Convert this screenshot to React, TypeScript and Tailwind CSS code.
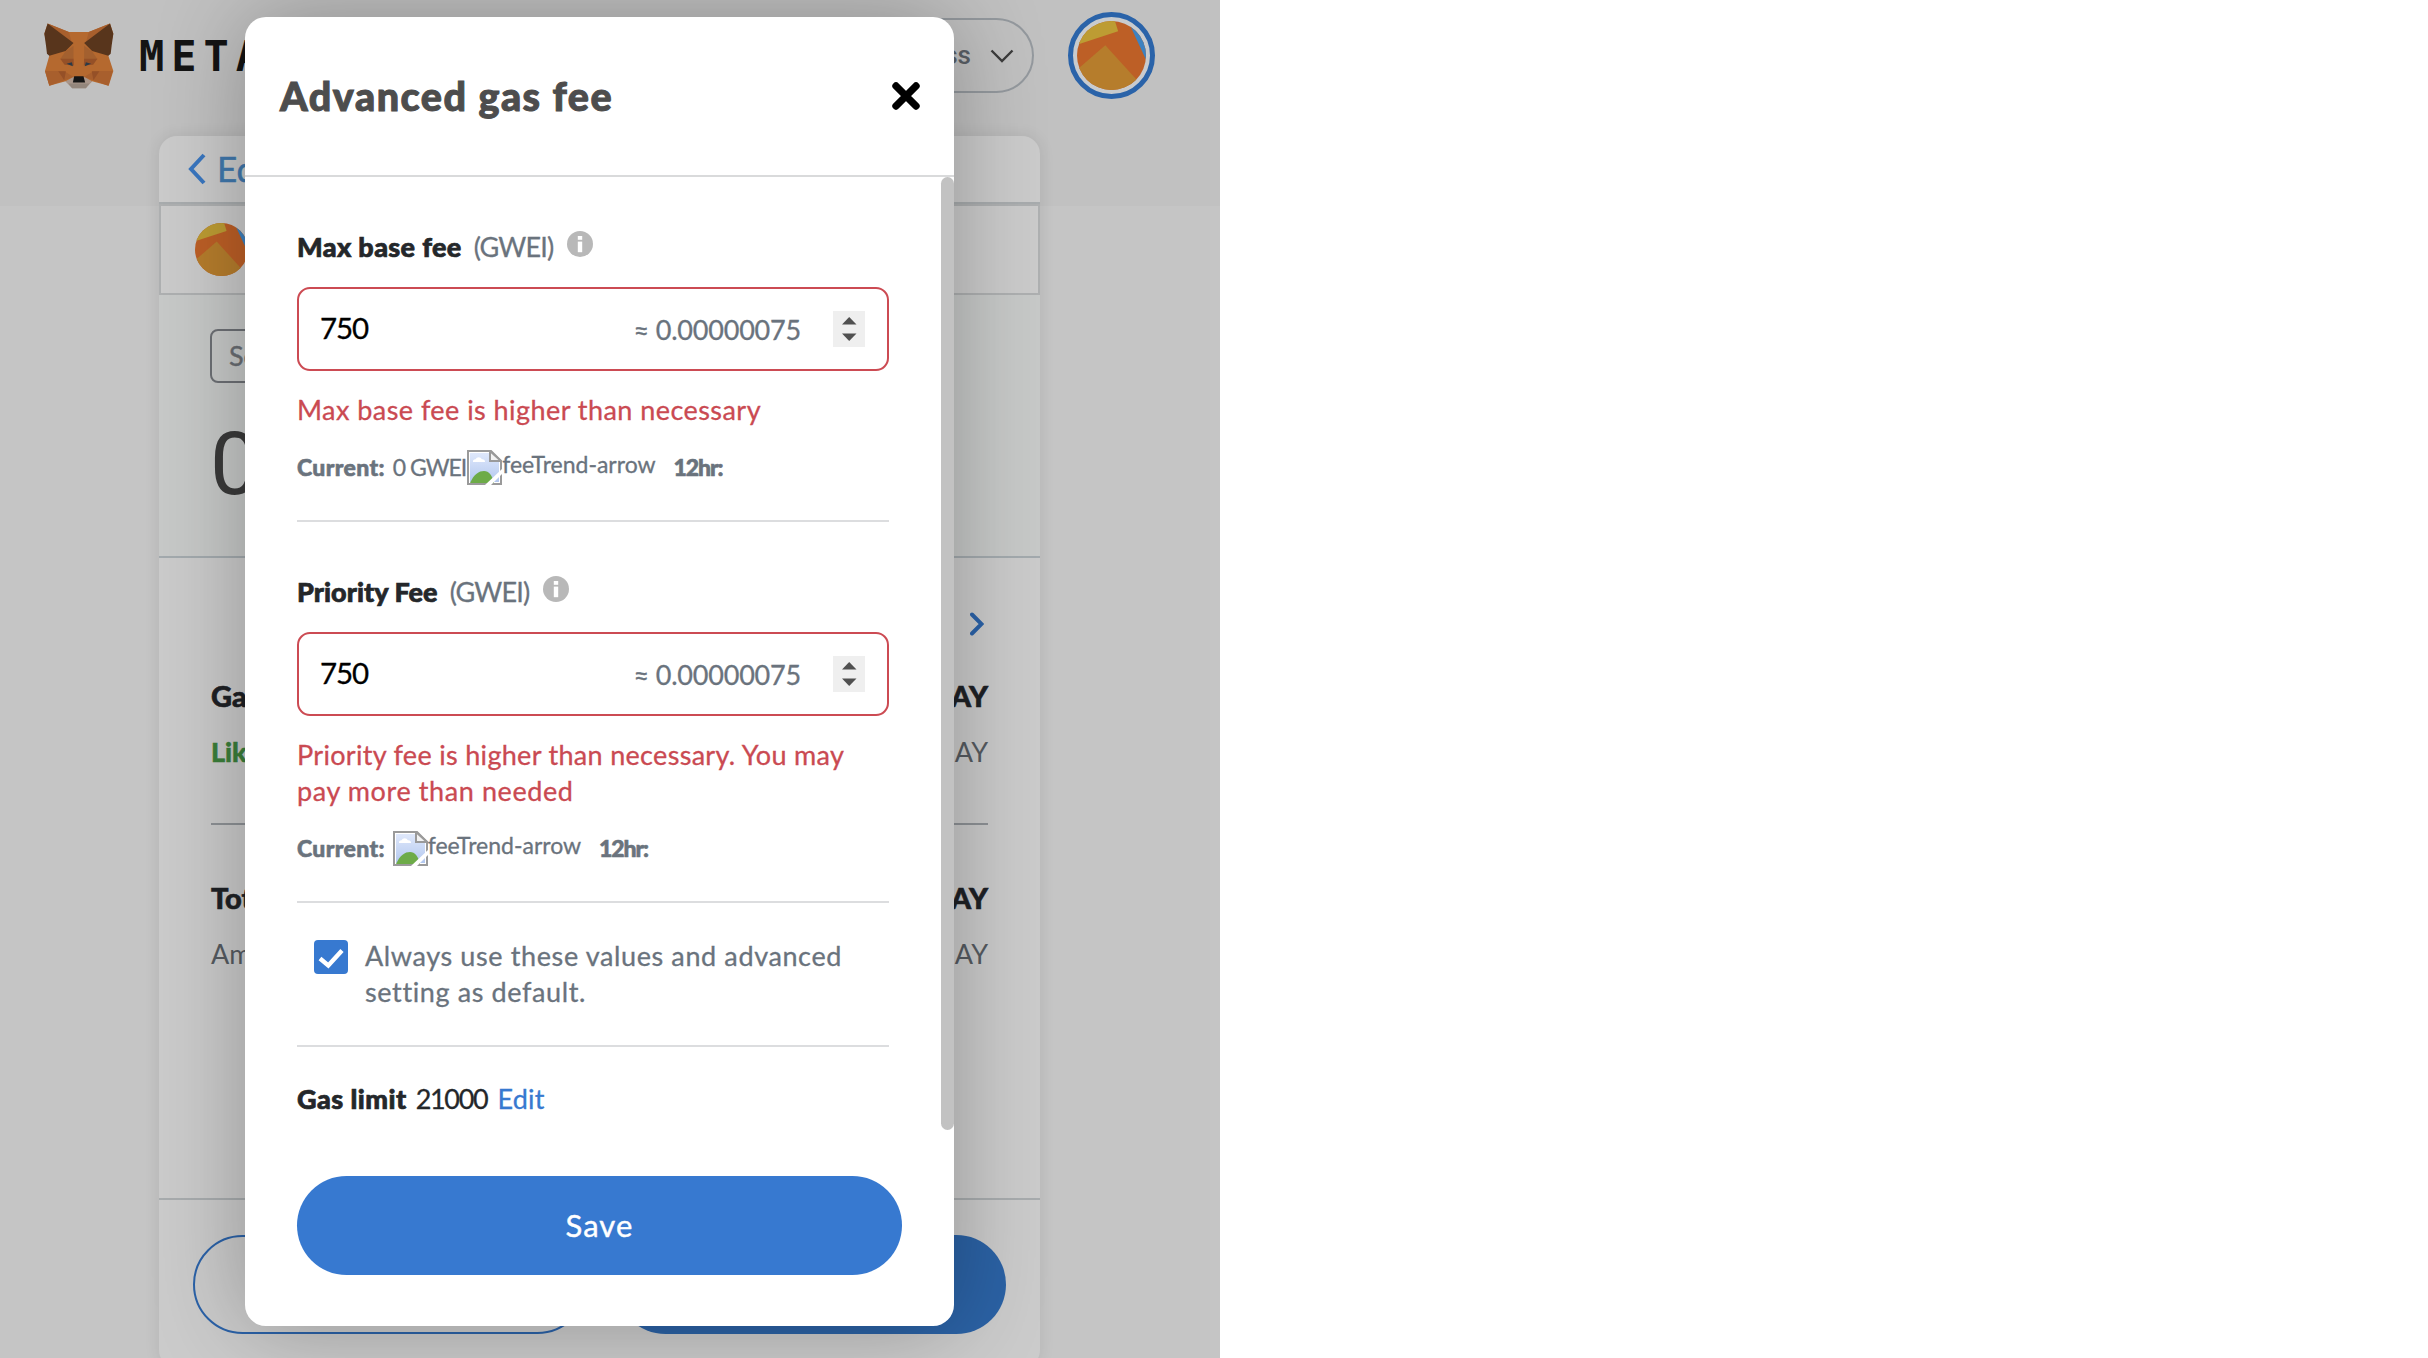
import type { ReactNode } from 'react';

function Avatar({ className }: { className: string }) {
  return (
    <svg viewBox="0 0 100 100" className={`rounded-full ${className}`}>
      <rect width="100" height="100" fill="#bd5f26" />
      <polygon points="0,0 55,0 59.6,15 0,34.5" fill="#bd9c33" />
      <polygon points="41,35 0,70.5 0,100 100,100" fill="#b67d2c" />
      <polygon points="74,0 100,56 100,0" fill="#3d82c0" />
    </svg>
  );
}

function Fox() {
  return (
    <svg viewBox="132 68 211 198" className="h-[66px] w-[70px] shrink-0">
      <polygon
        points="143,69 207,95 267,95 331,69 341,100 326,166 341,212 327,257 277,243 258,262 217,262 197,243 148,257 135,212 148,166 133,100"
        fill="#b5692f"
      />
      <polygon points="143,69 207,95 215,124" fill="#a85f2d" />
      <polygon points="331,69 267,95 259,124" fill="#a85f2d" />
      <polygon points="221,128 181,175 148,166 197,152" fill="#b5692f" />
      <polygon points="135,212 192,212 221,230 148,257" fill="#a85f2d" />
      <polygon points="339,212 282,212 253,230 326,257" fill="#a85f2d" />
      <polygon points="221,136 221,182 181,177 196,154" fill="#a3602f" />
      <polygon points="253,136 253,182 293,177 278,154" fill="#a3602f" />
      <polygon points="181,175 221,175 222,196 194,193" fill="#955027" />
      <polygon points="293,175 253,175 252,196 280,193" fill="#955027" />
      <polygon points="175,213 198,213 193,240" fill="#955027" />
      <polygon points="299,213 276,213 281,240" fill="#955027" />
      <polygon points="143,69 221,128 197,152 148,166 141,160 138,135 133,100" fill="#58351c" />
      <polygon points="331,69 253,128 277,152 326,166 333,160 336,135 341,100" fill="#58351c" />
      <polygon points="197,243 219,231 255,231 277,243 258,264 217,264" fill="#a8968b" />
      <polygon points="205,250 269,250 258,264 217,264" fill="#93867c" />
      <polygon points="223,228 251,228 256,247 219,247" fill="#151515" />
      <polygon points="200,190 216,186 219,198" fill="#2a3a48" />
      <polygon points="274,190 258,186 255,198" fill="#2a3a48" />
    </svg>
  );
}

function BrokenImage() {
  return (
    <svg viewBox="0 0 35 35" className="h-[35px] w-[35px] shrink-0">
      <defs>
        <linearGradient id="sky" x1="0" y1="0" x2="0" y2="1">
          <stop offset="0" stopColor="#dfe8fb" />
          <stop offset="1" stopColor="#b3c8ef" />
        </linearGradient>
      </defs>
      <path d="M1 1H24L34 11V34H1Z" fill="#fff" stroke="#9a9a9a" strokeWidth="2" />
      <path d="M3 3H23V12H32V32H3Z" fill="url(#sky)" />
      <path d="M6 12a2.5 2.5 0 0 1 2.5-2.8a3.6 3.6 0 0 1 6.4 0A2.6 2.6 0 0 1 18 12Z" fill="#fff" />
      <path d="M3 33C7 24 12 21 17 21S25 25 27 33Z" fill="#6dab48" />
      <path d="M23 1V11H34Z" fill="#f3f3f3" stroke="#9a9a9a" strokeWidth="2" />
      <path d="M35 19L18 35H24L35 24Z" fill="#fff" />
    </svg>
  );
}

function InfoIcon() {
  return (
    <svg viewBox="0 0 26 26" className="mb-[7px] ml-[14px] h-[26px] w-[26px]">
      <circle cx="13" cy="13" r="13" fill="#b8b8b8" />
      <rect x="10.8" y="5" width="4.4" height="3.8" fill="#fff" />
      <rect x="10.8" y="10.6" width="4.4" height="10.6" fill="#fff" />
    </svg>
  );
}

function Spinner() {
  return (
    <svg viewBox="0 0 32 36" className="mb-px ml-8 h-9 w-8 bg-[#efefef]">
      <polygon points="9,13.5 16.2,6 23.5,13.5" fill="#505050" />
      <polygon points="9,22.5 16.2,30 23.5,22.5" fill="#505050" />
    </svg>
  );
}

function FeeField({
  label,
  error,
  current,
}: {
  label: ReactNode;
  error: ReactNode;
  current: ReactNode;
}) {
  return (
    <section className="w-[592px] border-b-2 border-[#dcdddf] pt-[52px] pb-9">
      <div className="flex h-9 items-center text-[27px] leading-9">
        {label}
        <InfoIcon />
      </div>
      <div className="mt-[22px] flex h-[84px] items-center rounded-[13px] border-2 border-[#cc4b53] pr-[22px] pl-[21px]">
        <span className="flex-1 pb-px text-[29.5px] tracking-[-1.1px] text-black [-webkit-text-stroke:0.3px]">750</span>
        <span className="pt-0.5 text-[27px] tracking-[-0.2px] text-[#6a737d] [-webkit-text-stroke:0.3px]">
          ≈ 0.00000075
        </span>
        <Spinner />
      </div>
      <div className="mt-[21px] text-[27px] leading-9 text-[#ca4a52] [-webkit-text-stroke:0.3px]">{error}</div>
      <div className="mt-5 flex h-9 items-center text-[23px] leading-9 text-[#6a737d]">
        <b className="mr-2 pt-0.5 font-black tracking-[0.35px] [-webkit-text-stroke:0.6px]">Current:</b>
        {current}
        <div className="mt-0.5 flex items-start">
          <BrokenImage />
          <span className="-mt-1 leading-9 [-webkit-text-stroke:0.3px]">feeTrend-arrow</span>
        </div>
        <b className="ml-[18px] pt-0.5 font-black tracking-[-1.1px] [-webkit-text-stroke:0.6px]">12hr:</b>
      </div>
    </section>
  );
}

function SendPage() {
  return (
    <div className="h-[1358px] w-[1220px] overflow-hidden bg-[#c5c5c5]">
      <header className="flex h-[136px] items-start bg-[#c1c1c1]">
        <div className="flex h-[111px] flex-1 items-center pl-11">
          <Fox />
          <span className="ml-[25px] pt-0.5 font-['DejaVu_Sans_Mono'] text-[42px] leading-none font-bold tracking-[7px] text-[#141414]">
            METAMASK
          </span>
        </div>
        <div className="mt-[18px] flex h-[75px] w-[300px] items-center justify-end rounded-full border-2 border-[#94999e] pr-5">
          <span className="font-['Roboto'] text-[26px] font-medium text-[#5a6067]">ss</span>
          <svg viewBox="0 0 24 14" className="mr-[-2px] ml-[19px] h-[14px] w-6">
            <path d="M1.5 1.5L12 12L22.5 1.5" fill="none" stroke="#3c3c3c" strokeWidth="2.4" />
          </svg>
        </div>
        <div className="mt-3 mr-[65px] ml-[34px] flex size-[87px] items-center justify-center rounded-full border-[5px] border-[#2a63a9] bg-[#c8cbce]">
          <Avatar className="size-[69px]" />
        </div>
      </header>
      <div className="h-[70px] bg-[#c1c1c1] px-[159px] pr-[180px]">
        <main className="flex h-[1232px] flex-col rounded-[18px] bg-[#cbcbcb] shadow-[0_0_16px_rgba(0,0,0,0.09)]">
          <div className="flex h-[68px] items-center border-b-2 border-[#a8acae] pl-[29px] text-[35px] text-[#4078ad]">
            <svg viewBox="0 0 18 32" className="h-8 w-[18px]">
              <path d="M16 2L3 16L16 30" fill="none" stroke="#3a77c0" strokeWidth="4" />
            </svg>
            <span className="ml-[11px] pb-0.5 [-webkit-text-stroke:0.5px]">Edit</span>
          </div>
          <div className="flex h-[91px] items-center border-2 border-[#aeb0b1] pl-[34px]">
            <Avatar className="size-[53px]" />
          </div>
          <div className="h-[263px] border-b-2 border-[#a3aaae] bg-[#c7c9c8] pt-[34px] pl-[51px]">
            <div className="flex h-[54px] w-[200px] items-center rounded-lg border-2 border-[#6d7075] pl-[17px] text-[27px] text-[#6a6e73] [-webkit-text-stroke:0.4px]">
              Send
            </div>
            <div className="mt-[37px] w-16 font-['Roboto'] text-[88px] leading-[88px] text-[#3a3a3a]">0</div>
          </div>
          <div className="h-[640px] px-[52px] pt-[46px] leading-9">
            <div className="flex h-10 items-center justify-end pr-1">
              <svg viewBox="0 0 14 24" className="h-6 w-[14px]">
                <path d="M2 2.5L11.5 12L2 21.5" fill="none" stroke="#2b62a8" strokeWidth="4" strokeLinecap="round" />
              </svg>
            </div>
            <div className="mt-[34px] flex justify-between text-[29px] font-black text-[#1e2125] [-webkit-text-stroke:0.6px]">
              <span>Gas</span>
              <span>AY</span>
            </div>
            <div className="mt-5 flex justify-between border-b-2 border-[#8e9296] pb-[53px] text-[27px] text-[#565b61]">
              <b className="font-black text-[#3b7f3a] [-webkit-text-stroke:0.5px]">Likely</b>
              <span>AY</span>
            </div>
            <div className="mt-[55px] flex justify-between text-[29px] font-black text-[#1e2125] [-webkit-text-stroke:0.6px]">
              <span>Total</span>
              <span>AY</span>
            </div>
            <div className="mt-5 flex justify-between text-[27px] text-[#565b61]">
              <span>Amount</span>
              <span>AY</span>
            </div>
          </div>
          <footer className="flex flex-1 gap-[29px] border-t-2 border-[#a8acae] px-[34px] pt-[35px]">
            <div className="h-[99px] flex-1 rounded-full border-2 border-[#2b62a8]" />
            <div className="h-[99px] flex-1 rounded-full bg-[#2b62a5]" />
          </footer>
        </main>
      </div>
    </div>
  );
}

export default function App() {
  return (
    <div className="relative h-[1358px] w-[2428px] overflow-hidden bg-white font-['Lato','Noto_Sans',sans-serif]">
      <div className="relative h-[1358px] w-[1219.5px] overflow-hidden">
        <SendPage />
        <div
          role="dialog"
          className="absolute top-[17px] left-[245px] h-[1309px] w-[709px] rounded-[21px] bg-white shadow-[0_0_90px_rgba(0,0,0,0.28)]"
        >
          <div className="flex h-40 items-center justify-between border-b-2 border-[#d9dadb] pr-[33px] pl-[35px]">
            <h2 className="text-[39.5px] font-black tracking-[1.5px] text-[#4d4d4d] [-webkit-text-stroke:1px]">
              Advanced gas fee
            </h2>
            <svg viewBox="0 0 30 30" className="h-[30px] w-[30px]">
              <path d="M5 5L25 25M25 5L5 25" stroke="#000" strokeWidth="7.4" strokeLinecap="round" />
            </svg>
          </div>
          <div className="px-[52px]">
            <FeeField
              label={
                <>
                  <b className="font-black tracking-[0.35px] text-[#24272a] [-webkit-text-stroke:0.7px]">
                    Max base fee
                  </b>
                  <span className="ml-3 tracking-[-0.8px] text-[#6a737d] [-webkit-text-stroke:0.3px]">(GWEI)</span>
                </>
              }
              error={<p className="tracking-[0.45px]">Max base fee is higher than necessary</p>}
              current={<span className="mr-px pt-px tracking-[-1px] [-webkit-text-stroke:0.3px]">0 GWEI</span>}
            />
            <FeeField
              label={
                <>
                  <b className="font-black tracking-[0.05px] text-[#24272a] [-webkit-text-stroke:0.7px]">
                    Priority Fee
                  </b>
                  <span className="ml-3 tracking-[-0.8px] text-[#6a737d] [-webkit-text-stroke:0.3px]">(GWEI)</span>
                </>
              }
              error={
                <>
                  <p className="tracking-[0.31px]">Priority fee is higher than necessary. You may</p>
                  <p className="tracking-[0.6px]">pay more than needed</p>
                </>
              }
              current={null}
            />
            <div className="flex w-[592px] items-start border-b-2 border-[#dcdddf] pt-[34px] pb-9 pl-[17px]">
              <svg viewBox="0 0 34 34" className="mt-[3px] size-[34px] rounded bg-[#3779d0]">
                <path d="M6 18.5L14.3 25.5L28 10.5" fill="none" stroke="#fff" strokeWidth="4.4" />
              </svg>
              <div className="ml-[17px] pt-px text-[27px] leading-[35.5px] tracking-[0.62px] text-[#6a737d] [-webkit-text-stroke:0.3px]">
                <p>Always use these values and advanced</p>
                <p>setting as default.</p>
              </div>
            </div>
            <div className="mt-[34px] flex h-9 items-center text-[27px] leading-9 text-[#24272a]">
              <b className="font-black tracking-[0.45px] [-webkit-text-stroke:0.7px]">Gas limit</b>
              <span className="ml-[9px] tracking-[-1.3px] [-webkit-text-stroke:0.3px]">21000</span>
              <span className="ml-2.5 tracking-[0.2px] text-[#3779d0] [-webkit-text-stroke:0.3px]">Edit</span>
            </div>
            <button className="mt-[59px] block h-[98.5px] w-[605px] rounded-full bg-[#3779d0] text-[31px] tracking-[1.1px] text-white [-webkit-text-stroke:0.4px]">
              Save
            </button>
          </div>
          <div className="absolute top-40 right-0 h-[953px] w-[13px] rounded-full bg-[#c2c2c2]" />
        </div>
      </div>
    </div>
  );
}
